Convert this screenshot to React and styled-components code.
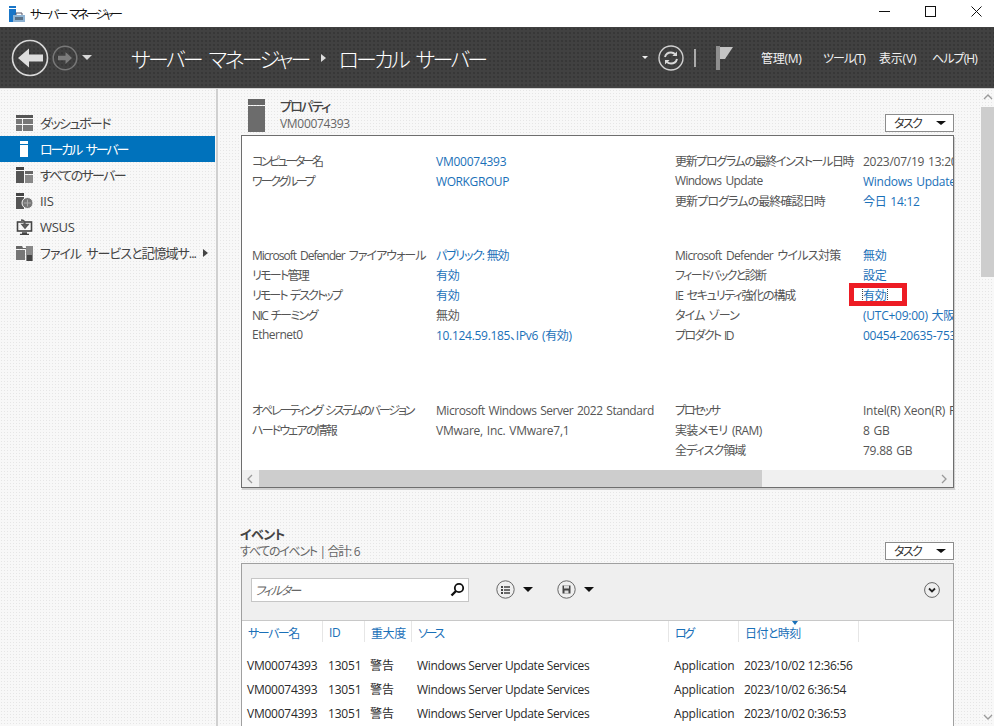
import React from 'react'
import styled, { createGlobalStyle } from 'styled-components'

const FONT = `"Open Sans", "Noto Sans CJK JP", sans-serif`

const GlobalStyle = createGlobalStyle`
  html, body { margin: 0; padding: 0; background: #fff; }
  body {
    font-family: ${FONT};
    font-size: 12px;
    font-feature-settings: "palt";
  }
`

const Window = styled.div`
  width: 994px;
  height: 726px;
  overflow: hidden;
  display: flex;
  flex-direction: column;
`

const TitleBar = styled.div`
  height: 27px;
  flex: none;
  display: flex;
  align-items: center;
  background: #fff;
  padding-left: 9px;
`
const AppName = styled.span`
  margin-left: 5px;
  color: #111;
  letter-spacing: -2.6px;
  word-spacing: 3px;
`
const WinButtons = styled.div`
  margin-left: auto;
  margin-right: -5px;
  display: flex;
  height: 100%;
`
const WinButton = styled.div`
  width: 46px;
  display: flex;
  align-items: center;
  justify-content: center;
  padding-bottom: 5px;
`

const Header = styled.div`
  height: 62px;
  flex: none;
  display: flex;
  align-items: center;
  color: #fff;
  background-color: #414141;
  background-image: radial-gradient(#2c2c2c 0.6px, transparent 0.8px);
  background-size: 4px 4px;
  border-bottom: 1px solid #d0d0d0;
  box-sizing: border-box;
  padding-left: 11px;
`
const NavIcons = styled.div`
  display: flex;
  align-items: center;
  gap: 3px;
  width: 120px;
`
const Crumb = styled.span`
  font-size: 21px;
  font-weight: 300;
  white-space: pre;
  letter-spacing: -2.75px;
  word-spacing: 5px;
`
const CrumbArrow = styled.span`
  width: 0;
  height: 0;
  margin: 0 13px 0 12px;
  border-left: 5px solid #ddd;
  border-top: 4px solid transparent;
  border-bottom: 4px solid transparent;
`
const Tools = styled.div`
  margin-left: auto;
  display: flex;
  align-items: center;
`
const Caret = styled.span`
  display: inline-block;
  flex: none;
  width: 0;
  height: 0;
  margin-left: ${p => p.$ml || 0}px;
  border-left: ${p => p.$size || 4}px solid transparent;
  border-right: ${p => p.$size || 4}px solid transparent;
  border-top: ${p => p.$drop || p.$size || 4}px solid ${p => p.$color || '#111'};
`
const Spacer = styled.span`
  width: ${p => p.$w}px;
  flex: none;
`
const Divider = styled.span`
  width: 2px;
  height: 18px;
  background: #aaa;
  margin: 0 20px 0 10px;
`
const MenuItem = styled.span`
  font-size: 12px;
  letter-spacing: ${p => p.$ls}px;
  color: #f2f2f2;
  width: ${p => p.$w}px;
`

const Body = styled.div`
  flex: 1;
  display: flex;
  min-height: 0;
  background-color: #f8f8f8;
  background-image: radial-gradient(#e6e6e6 0.6px, transparent 0.8px);
  background-size: 3px 3px;
`

const Nav = styled.nav`
  width: 216px;
  flex: none;
  padding-top: 21px;
  box-sizing: content-box;
  border-right: 2px solid #d0d0d0;
`
const NavItem = styled.div`
  width: 215px;
  height: 26px;
  box-sizing: border-box;
  display: flex;
  align-items: center;
  padding: 0 0 1px 16px;
  gap: 7px;
  font-size: 13px;
  letter-spacing: ${p => p.$ls}px;
  word-spacing: 3px;
  white-space: nowrap;
  color: ${p => (p.$active ? '#fff' : '#444')};
  background: ${p => (p.$active ? '#0072bc' : 'transparent')};
  svg { flex: none; }
`
const NavArrow = styled.span`
  width: 0;
  height: 0;
  border-left: 5px solid #444;
  border-top: 4px solid transparent;
  border-bottom: 4px solid transparent;
`

const Main = styled.main`
  flex: 1;
  min-width: 0;
  padding: 0 27px 0 23px;
`

const SectionHead = styled.div`
  height: ${p => p.$h}px;
  display: flex;
  align-items: flex-end;
  padding-bottom: 3px;
  box-sizing: border-box;
`
const HeadIcon = styled.div`
  margin: 0 15px 0 7px;
  align-self: flex-end;
  height: 33px;
`
const HeadText = styled.div`
  display: flex;
  flex-direction: column;
  margin-left: ${p => p.$ml || 0}px;
`
const HeadTitle = styled.span`
  font-size: 13px;
  font-weight: ${p => p.$weight || 500};
  color: #444;
  letter-spacing: ${p => p.$ls}px;
  line-height: 18px;
`
const HeadSub = styled.span`
  font-size: 12px;
  color: #666;
  letter-spacing: ${p => p.$ls}px;
  word-spacing: 1px;
  line-height: 17px;
`
const TaskButton = styled.div`
  margin-left: auto;
  width: 69px;
  height: 18px;
  box-sizing: border-box;
  border: 1px solid #8c8c8c;
  background: #fff;
  display: flex;
  align-items: center;
  justify-content: space-between;
  padding: 0 7px 0 8px;
  color: #333;
  letter-spacing: -1.6px;
`

const PropsPanel = styled.section`
  position: relative;
  height: 353px;
  box-sizing: border-box;
  border: 1px solid #6e6e6e;
  box-shadow: 1px 2px 0 #d0d0d0;
  background: #fff;
  display: flex;
  flex-direction: column;
`
const PropsBody = styled.div`
  height: 334px;
  flex: none;
  overflow: hidden;
  padding: 15px 0 0 10px;
  box-sizing: border-box;
`
const PropGroup = styled.div`
  display: grid;
  grid-template-columns: 184px 239px 188px 200px;
  grid-auto-rows: 20px;
  margin-bottom: ${p => p.$gap}px;
  align-items: center;
  white-space: nowrap;
`
const Label = styled.span`
  color: #555;
  letter-spacing: ${p => p.$ls}px;
  word-spacing: 2px;
  padding-bottom: 1px;
`
const Value = styled.span`
  color: ${p => (p.$link ? '#1a70b8' : '#555')};
  letter-spacing: ${p => p.$ls}px;
  word-spacing: 1px;
  width: fit-content;
  line-height: 15px;
  outline: ${p => (p.$focus ? '1px dotted #444' : 'none')};
`
const Highlight = styled.div`
  position: absolute;
  left: 607px;
  top: 147px;
  width: 58px;
  height: 23px;
  box-sizing: border-box;
  border: 5px solid #ed1c24;
`
const HScroll = styled.div`
  height: 17px;
  flex: none;
  display: flex;
  align-items: center;
  justify-content: space-between;
  background: #f0f0f0;
`
const ScrollBtn = styled.div`
  width: 17px;
  height: 100%;
  display: flex;
  align-items: center;
  justify-content: center;
  flex: none;
`
const HThumb = styled.div`
  width: 503px;
  height: 100%;
  background: #cdcdcd;
  margin-right: auto;
`

const EventsPanel = styled.section`
  border: 1px solid #a0a0a0;
  border-bottom: 0;
  background: #fff;
  height: 200px;
`
const FilterBar = styled.div`
  height: 57px;
  box-sizing: border-box;
  background: #efefef;
  border-bottom: 1px solid #c8c8c8;
  display: flex;
  align-items: center;
  padding: 0 13px 5px 9px;
`
const FilterInput = styled.div`
  width: 218px;
  height: 24px;
  box-sizing: border-box;
  background: #fff;
  border: 1px solid #c6c6c6;
  display: flex;
  align-items: center;
  justify-content: space-between;
  padding: 0 3px 0 3px;
  font-style: italic;
  color: #666;
  letter-spacing: -1.6px;
`
const RoundTool = styled.div`
  display: flex;
  align-items: center;
  gap: 8px;
  margin-left: ${p => p.$ml}px;
`
const ExpandButton = styled.div`
  margin-left: auto;
  height: 16px;
`
const TableHead = styled.div`
  display: grid;
  grid-template-columns: 81px 42px 47px 257px 70px 120px;
  height: 21px;
`
const HeadCell = styled.div`
  position: relative;
  border-right: 1px solid #e6e6e6;
  padding: 3px 0 0 6px;
  color: #1a70b8;
  letter-spacing: ${p => p.$ls}px;
  white-space: nowrap;
`
const SortMark = styled.span`
  position: absolute;
  left: 53px;
  top: 0;
  width: 0;
  height: 0;
  border-left: 3px solid transparent;
  border-right: 3px solid transparent;
  border-top: 4px solid #1a70b8;
`
const Rows = styled.div`
  padding-top: 11px;
`
const Row = styled.div`
  display: grid;
  grid-template-columns: 81px 42px 47px 257px 70px 120px;
  height: 24px;
  align-items: center;
  color: #2a2a2a;
  white-space: nowrap;
`
const Cell = styled.span`
  padding-left: 5px;
  letter-spacing: ${p => p.$ls}px;
`

const VScroll = styled.div`
  width: 13px;
  flex: none;
  display: flex;
  flex-direction: column;
  align-items: center;
`
const VButton = styled.div`
  height: 18px;
  flex: none;
  display: flex;
  align-items: center;
  justify-content: center;
`
const VThumb = styled.div`
  width: 100%;
  height: 170px;
  background: #cdcdcd;
`
const VSpacer = styled.div`
  flex: 1;
`

const AppIcon = () => (
  <svg width="16" height="16" viewBox="0 0 16 16">
    <rect x="0" y="0" width="7" height="2" fill="#1976c8" />
    <rect x="0" y="3" width="7" height="13" fill="#1976c8" />
    <path d="M4 9h12v7H4z" fill="#8fb4d4" />
    <path d="M7 9V7h6v2" fill="none" stroke="#556" />
    <path d="M6 11h8v3H6z" fill="#456" opacity=".7" />
  </svg>
)

const BackIcon = () => (
  <svg width="38" height="38" viewBox="0 0 38 38">
    <circle cx="19" cy="19" r="17.5" fill="none" stroke="#d8d8d8" strokeWidth="1.6" />
    <path d="M7 19 18 9.5v6h14v7H18v6z" fill="#dedede" />
  </svg>
)

const ForwardIcon = () => (
  <svg width="26" height="26" viewBox="0 0 26 26">
    <circle cx="13" cy="13" r="11.8" fill="none" stroke="#777" strokeWidth="1.5" />
    <path d="M20 13 13.5 7v3.8H6v4.4h7.5V19z" fill="#7c7c7c" />
  </svg>
)

const RefreshIcon = () => (
  <svg width="26" height="26" viewBox="0 0 26 26" fill="none">
    <circle cx="13" cy="13" r="12" stroke="#d0d0d0" strokeWidth="1.4" />
    <path d="M7 12c.8-3 3-4.5 6-4.5 1.8 0 3.2.7 4.3 1.8" stroke="#d8d8d8" strokeWidth="2" />
    <path d="M19 6.5v4.6h-4.6z" fill="#d8d8d8" />
    <path d="M19 14c-.8 3-3 4.5-6 4.5-1.8 0-3.2-.7-4.3-1.8" stroke="#d8d8d8" strokeWidth="2" />
    <path d="M7 19.5v-4.6h4.6z" fill="#d8d8d8" />
  </svg>
)

const FlagIcon = () => (
  <svg width="18" height="24" viewBox="0 0 18 24">
    <rect x="0" y="0" width="4" height="24" fill="#8f8f8f" />
    <path d="M4 1h13L9 13H4z" fill="#c4c4c4" />
  </svg>
)

const DashIcon = () => (
  <svg width="17" height="16" viewBox="0 0 17 16">
    <rect width="17" height="3" fill="#555" />
    <path d="M0 4h6v5H0zM7 4h10v5H7zM0 10h6v6H0zM7 10h10v6H7z" fill="#777" />
  </svg>
)

const ServerIcon = () => (
  <svg width="17" height="16" viewBox="0 0 17 16">
    <rect x="4" y="0" width="8" height="3" fill="#fff" />
    <rect x="4" y="4" width="8" height="12" fill="#fff" />
  </svg>
)

const ServersIcon = () => (
  <svg width="17" height="16" viewBox="0 0 17 16">
    <rect x="0" y="0" width="8" height="3" fill="#444" />
    <rect x="0" y="4" width="8" height="12" fill="#555" />
    <rect x="9" y="4" width="8" height="3" fill="#666" />
    <rect x="9" y="8" width="8" height="8" fill="#888" />
  </svg>
)

const IisIcon = () => (
  <svg width="17" height="16" viewBox="0 0 17 16">
    <rect x="0" y="0" width="8" height="3" fill="#444" />
    <rect x="0" y="4" width="8" height="12" fill="#555" />
    <circle cx="11.5" cy="10" r="5.5" fill="#777" stroke="#f4f4f4" strokeWidth="1" />
    <path d="M8 10h7M11.5 6.5v7" stroke="#aaa" strokeWidth="1" />
  </svg>
)

const WsusIcon = () => (
  <svg width="17" height="16" viewBox="0 0 17 16" fill="none">
    <rect x="1.5" y="3" width="14" height="9" stroke="#444" strokeWidth="1.6" />
    <path d="M6 14h5M4 15.5h9" stroke="#444" strokeWidth="1.5" />
    <path d="M5 1c3 0 4 1 4 4v2M6 5.5l3 3.5 3-3.5z" stroke="#555" strokeWidth="1.5" fill="#777" />
  </svg>
)

const FileIcon = () => (
  <svg width="17" height="16" viewBox="0 0 17 16">
    <path d="M0 1h6l1 2h4v1H0z" fill="#666" />
    <rect x="0" y="5" width="9" height="10" fill="#777" />
    <path d="M10 1h7v15h-7z" fill="#888" />
    <path d="M11 10h5v6h-5z" fill="#444" />
  </svg>
)

const PropertyIcon = () => (
  <svg width="17" height="33" viewBox="0 0 17 33">
    <rect width="17" height="6" fill="#666" />
    <rect y="7" width="17" height="26" fill="#6c6c6c" />
  </svg>
)

const SearchIcon = () => (
  <svg width="15" height="15" viewBox="0 0 15 15" fill="none">
    <circle cx="9" cy="6" r="4.2" stroke="#111" strokeWidth="1.8" />
    <path d="M6 9 1.5 13.5" stroke="#111" strokeWidth="2.4" />
  </svg>
)

const ListIcon = () => (
  <svg width="19" height="19" viewBox="0 0 19 19" fill="none">
    <circle cx="9.5" cy="9.5" r="8.7" stroke="#666" />
    <path d="M5 6h2v2H5zM5 9h2v2H5zM5 12h2v2H5z" fill="#444" />
    <path d="M8 7h6M8 10h6M8 13h6" stroke="#444" strokeWidth="1.4" />
  </svg>
)

const SaveIcon = () => (
  <svg width="19" height="19" viewBox="0 0 19 19" fill="none">
    <circle cx="9.5" cy="9.5" r="8.7" stroke="#666" />
    <path d="M5.5 5.5h8v8h-8z" fill="#444" />
    <path d="M7 5.5h5v3H7z" fill="#ddd" />
    <path d="M7.5 10.5h4v3h-4z" fill="#ddd" />
  </svg>
)

const ExpandIcon = () => (
  <svg width="16" height="16" viewBox="0 0 16 16" fill="none">
    <circle cx="8" cy="8" r="7.4" stroke="#666" />
    <path d="M5 6.5 8 9.5 11 6.5" stroke="#222" strokeWidth="1.8" />
  </svg>
)

const Chevron = ({ dir }) => {
  const d = {
    left: 'M6 1 2 5 6 9',
    right: 'M2 1 6 5 2 9',
    up: 'M1 6 5 2 9 6',
    down: 'M1 3 5 7 9 3',
  }[dir]
  return (
    <svg width="10" height="10" viewBox="0 0 10 10" fill="none">
      <path d={d} stroke="#9a9a9a" strokeWidth="1.3" />
    </svg>
  )
}

const navItems = [
  { icon: <DashIcon />, label: 'ダッシュボード', ls: -1.55 },
  { icon: <ServerIcon />, label: 'ローカル サーバー', ls: -2.1, active: true },
  { icon: <ServersIcon />, label: 'すべてのサーバー', ls: -1.65 },
  { icon: <IisIcon />, label: 'IIS', ls: -0.3 },
  { icon: <WsusIcon />, label: 'WSUS', ls: -0.3 },
  { icon: <FileIcon />, label: 'ファイル サービスと記憶域サ...', ls: -1, more: true },
]

// the reference font has narrower kana than Noto, so each string is tightened to its width
const spacing = {
  'コンピューター名': -2.5,
  'ワークグループ': -2.2,
  'Microsoft Defender ファイアウォール': -1,
  'リモート管理': -1.7,
  'リモート デスクトップ': -1.9,
  'NIC チーミング': -1.6,
  'Ethernet0': -0.5,
  'オペレーティング システムのバージョン': -2.1,
  'ハードウェアの情報': -1.8,
  '更新プログラムの最終インストール日時': -1.35,
  'Windows Update': -0.7,
  '更新プログラムの最終確認日時': -0.9,
  'Microsoft Defender ウイルス対策': -0.7,
  'フィードバックと診断': -1.6,
  'IE セキュリティ強化の構成': -1.2,
  'タイム ゾーン': -0.85,
  'プロダクト ID': -1.65,
  'プロセッサ': -2.2,
  '実装メモリ (RAM)': -0.65,
  '全ディスク領域': -1,
  'パブリック: 無効': -1.2,
  'Microsoft Windows Server 2022 Standard': -0.45,
  'WORKGROUP': -0.4,
  '10.124.59.185、IPv6 (有効)': -0.3,
}
const ls = text => spacing[text] ?? -0.25

const propGroups = [
  {
    gap: 34,
    rows: [
      ['コンピューター名', 'VM00074393', 1, '更新プログラムの最終インストール日時', '2023/07/19 13:20', 0],
      ['ワークグループ', 'WORKGROUP', 1, 'Windows Update', 'Windows Update のみ', 1],
      ['', '', 0, '更新プログラムの最終確認日時', '今日 14:12', 1],
    ],
  },
  {
    gap: 55,
    rows: [
      ['Microsoft Defender ファイアウォール', 'パブリック: 無効', 1, 'Microsoft Defender ウイルス対策', '無効', 1],
      ['リモート管理', '有効', 1, 'フィードバックと診断', '設定', 1],
      ['リモート デスクトップ', '有効', 1, 'IE セキュリティ強化の構成', '有効', 1, true],
      ['NIC チーミング', '無効', 0, 'タイム ゾーン', '(UTC+09:00) 大阪、札幌、東京', 1],
      ['Ethernet0', '10.124.59.185、IPv6 (有効)', 1, 'プロダクト ID', '00454-20635-75331-AAOEM', 1],
    ],
  },
  {
    gap: 0,
    rows: [
      ['オペレーティング システムのバージョン', 'Microsoft Windows Server 2022 Standard', 0, 'プロセッサ', 'Intel(R) Xeon(R) Platinum', 0],
      ['ハードウェアの情報', 'VMware, Inc. VMware7,1', 0, '実装メモリ (RAM)', '8 GB', 0],
      ['', '', 0, '全ディスク領域', '79.88 GB', 0],
    ],
  },
]

const eventCols = [-0.25, -0.2, 0, -0.35, -0.2, -0.3]
const events = [
  ['VM00074393', '13051', '警告', 'Windows Server Update Services', 'Application', '2023/10/02 12:36:56'],
  ['VM00074393', '13051', '警告', 'Windows Server Update Services', 'Application', '2023/10/02 6:36:54'],
  ['VM00074393', '13051', '警告', 'Windows Server Update Services', 'Application', '2023/10/02 0:36:53'],
]

export default function App() {
  return (
    <Window>
      <GlobalStyle />
      <TitleBar>
        <AppIcon />
        <AppName>サーバー マネージャー</AppName>
        <WinButtons>
          <WinButton>
            <svg width="11" height="11" viewBox="0 0 11 11"><path d="M0 5.5h11" stroke="#111" /></svg>
          </WinButton>
          <WinButton>
            <svg width="11" height="11" viewBox="0 0 11 11"><rect x=".5" y=".5" width="10" height="10" fill="none" stroke="#111" /></svg>
          </WinButton>
          <WinButton>
            <svg width="11" height="11" viewBox="0 0 11 11"><path d="M.5.5l10 10M10.5.5l-10 10" stroke="#111" /></svg>
          </WinButton>
        </WinButtons>
      </TitleBar>

      <Header>
        <NavIcons>
          <BackIcon />
          <ForwardIcon />
          <Caret $size={5} $color="#d8d8d8" $ml={1} />
        </NavIcons>
        <Crumb>サーバー マネージャー</Crumb>
        <CrumbArrow />
        <Crumb>ローカル サーバー</Crumb>
        <Tools>
          <Caret $size={3} $color="#eee" />
          <Spacer $w={10} />
          <RefreshIcon />
          <Divider />
          <FlagIcon />
          <Spacer $w={27} />
          <MenuItem $w={62} $ls={-0.3}>管理(M)</MenuItem>
          <MenuItem $w={56} $ls={-1}>ツール(T)</MenuItem>
          <MenuItem $w={53} $ls={-0.2}>表示(V)</MenuItem>
          <MenuItem $w={62} $ls={-0.9}>ヘルプ(H)</MenuItem>
        </Tools>
      </Header>

      <Body>
        <Nav>
          {navItems.map(item => (
            <NavItem key={item.label} $active={item.active} $ls={item.ls}>
              {item.icon}
              {item.label}
              {item.more && <NavArrow />}
            </NavItem>
          ))}
        </Nav>

        <Main>
          <SectionHead $h={46}>
            <HeadIcon><PropertyIcon /></HeadIcon>
            <HeadText>
              <HeadTitle $ls={-1.7}>プロパティ</HeadTitle>
              <HeadSub $ls={-0.3}>VM00074393</HeadSub>
            </HeadText>
            <TaskButton>タスク<Caret $size={5} $drop={4} /></TaskButton>
          </SectionHead>

          <PropsPanel>
            <PropsBody>
              {propGroups.map((group, i) => (
                <PropGroup key={i} $gap={group.gap}>
                  {group.rows.map((r, j) => (
                    <React.Fragment key={j}>
                      <Label $ls={ls(r[0])}>{r[0]}</Label>
                      <Value $link={r[2]} $ls={ls(r[1])}>{r[1]}</Value>
                      <Label $ls={ls(r[3])}>{r[3]}</Label>
                      <Value $link={r[5]} $focus={r[6]} $ls={ls(r[4])}>{r[4]}</Value>
                    </React.Fragment>
                  ))}
                </PropGroup>
              ))}
            </PropsBody>
            <HScroll>
              <ScrollBtn><Chevron dir="left" /></ScrollBtn>
              <HThumb />
              <ScrollBtn><Chevron dir="right" /></ScrollBtn>
            </HScroll>
            <Highlight />
          </PropsPanel>

          <SectionHead $h={75}>
            <HeadText $ml={-1}>
              <HeadTitle $ls={-0.6} $weight={700}>イベント</HeadTitle>
              <HeadSub $ls={-1.3}>すべてのイベント | 合計: 6</HeadSub>
            </HeadText>
            <TaskButton>タスク<Caret $size={5} $drop={4} /></TaskButton>
          </SectionHead>

          <EventsPanel>
            <FilterBar>
              <FilterInput>フィルター<SearchIcon /></FilterInput>
              <RoundTool $ml={27}><ListIcon /><Caret $size={5} /></RoundTool>
              <RoundTool $ml={24}><SaveIcon /><Caret $size={5} /></RoundTool>
              <ExpandButton><ExpandIcon /></ExpandButton>
            </FilterBar>
            <TableHead>
              <HeadCell $ls={-1.5}>サーバー名</HeadCell>
              <HeadCell $ls={-0.3}>ID</HeadCell>
              <HeadCell $ls={-0.4}>重大度</HeadCell>
              <HeadCell $ls={-2.4}>ソース</HeadCell>
              <HeadCell $ls={-2.5}>ログ</HeadCell>
              <HeadCell $ls={-0.6}><SortMark />日付と時刻</HeadCell>
            </TableHead>
            <Rows>
              {events.map((e, i) => (
                <Row key={i}>
                  {e.map((c, j) => <Cell key={j} $ls={eventCols[j]}>{c}</Cell>)}
                </Row>
              ))}
            </Rows>
          </EventsPanel>
        </Main>

        <VScroll>
          <VButton><Chevron dir="up" /></VButton>
          <VThumb />
          <VSpacer />
          <VButton><Chevron dir="down" /></VButton>
        </VScroll>
      </Body>
    </Window>
  )
}
